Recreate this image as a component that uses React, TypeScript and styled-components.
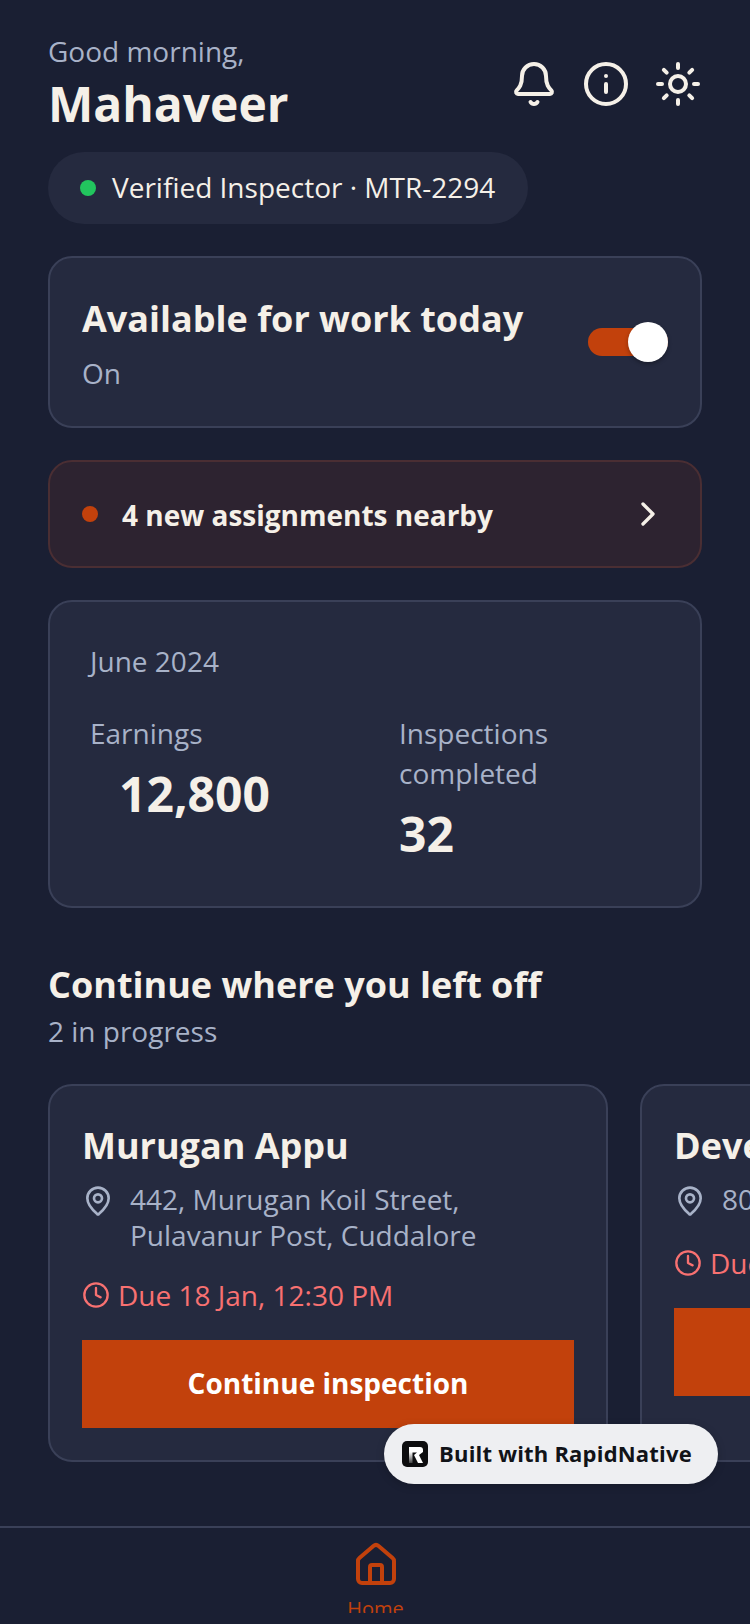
import React from "react";
import styled, { createGlobalStyle } from "styled-components";
import { Bell, ChevronRight, Clock, House, Info, MapPin, Sun } from "lucide-react";

const GlobalStyle = createGlobalStyle`
  html, body {
    margin: 0;
    padding: 0;
    background: #1a1f33;
  }
  * {
    box-sizing: border-box;
  }
`;

const assignments = [
  {
    name: "Murugan Appu",
    address: ["442, Murugan Koil Street,", "Pulavanur Post, Cuddalore"],
    due: "Due 18 Jan, 12:30 PM",
  },
  {
    name: "Devendran Pillai",
    address: ["80, Gandhi Nagar, Panruti"],
    due: "Due 19 Jan, 10:00 AM",
  },
];

const App: React.FC = () => {
  return (
    <Page>
      <GlobalStyle />
      <Content>
        <Header>
          <div>
            <Greeting>Good morning,</Greeting>
            <UserName>Mahaveer</UserName>
          </div>
          <HeaderIcons>
            <Bell size={48} strokeWidth={2} />
            <Info size={48} strokeWidth={2} />
            <Sun size={48} strokeWidth={2} />
          </HeaderIcons>
        </Header>

        <StatusPill>
          <Dot color="#22c55e" />
          <PillText>Verified Inspector · MTR-2294</PillText>
        </StatusPill>

        <AvailabilityCard>
          <div>
            <CardTitle>Available for work today</CardTitle>
            <CardHint>On</CardHint>
          </div>
          <Toggle>
            <ToggleKnob />
          </Toggle>
        </AvailabilityCard>

        <AlertCard>
          <Dot color="#c2410c" />
          <AlertText>4 new assignments nearby</AlertText>
          <ChevronRight size={40} strokeWidth={2} color="#f5f0e8" />
        </AlertCard>

        <StatsCard>
          <Month>June 2024</Month>
          <StatsRow>
            <Stat>
              <StatLabel>Earnings</StatLabel>
              <StatValue indent>12,800</StatValue>
            </Stat>
            <Stat>
              <StatLabel>
                Inspections
                <br />
                completed
              </StatLabel>
              <StatValue>32</StatValue>
            </Stat>
          </StatsRow>
        </StatsCard>

        <SectionTitle>Continue where you left off</SectionTitle>
        <SectionHint>2 in progress</SectionHint>

        <Carousel>
          {assignments.map((item) => (
            <JobCard key={item.name}>
              <JobName>{item.name}</JobName>
              <AddressRow>
                <MapPin size={32} strokeWidth={2} />
                <div>
                  {item.address.map((line) => (
                    <div key={line}>{line}</div>
                  ))}
                </div>
              </AddressRow>
              <DueRow>
                <Clock size={28} strokeWidth={2} />
                <span>{item.due}</span>
              </DueRow>
              <PrimaryButton>Continue inspection</PrimaryButton>
            </JobCard>
          ))}
        </Carousel>
      </Content>

      <TabBar>
        <TabItem>
          <House size={48} strokeWidth={2} />
          <TabLabel>Home</TabLabel>
        </TabItem>
      </TabBar>

      <BuiltBadge>
        <svg width="26" height="26" viewBox="0 0 26 26">
          <defs>
            <linearGradient id="logoStem" x1="0" y1="0" x2="0" y2="1">
              <stop offset="0" stopColor="#fff" />
              <stop offset="1" stopColor="#444" />
            </linearGradient>
          </defs>
          <rect width="26" height="26" rx="5" fill="#0d0d0f" />
          <path d="M7 6h11a3 3 0 0 1 3 3v2l-4 3 4 8h-5l-4-8 3-2.500H7z" fill="#fff" />
          <path d="M7 11h3.500v11H7z" fill="url(#logoStem)" />
        </svg>
        <BadgeText>Built with RapidNative</BadgeText>
      </BuiltBadge>
    </Page>
  );
};

const Page = styled.div`
  position: relative;
  width: 750px;
  height: 1624px;
  display: flex;
  flex-direction: column;
  overflow: hidden;
  background: #1a1f33;
  font-family: "Open Sans", "Liberation Sans", sans-serif;
  color: #f5f0e8;
`;

const Content = styled.main`
  flex: 1;
  min-height: 0;
  overflow: hidden;
  padding: 31px 0 0 48px;
`;

const Header = styled.header`
  display: flex;
  justify-content: space-between;
  align-items: center;
  padding-right: 48px;
`;

const Greeting = styled.div`
  font-size: 28px;
  line-height: 40px;
  color: #a8b2c8;
`;

const UserName = styled.h1`
  margin: 1px 0 0;
  font-size: 48px;
  line-height: 64px;
  font-weight: 700;
`;

const HeaderIcons = styled.div`
  display: flex;
  align-items: center;
  gap: 24px;
`;

const StatusPill = styled.div`
  display: inline-flex;
  align-items: center;
  gap: 16px;
  height: 72px;
  margin-top: 16px;
  padding: 0 33px 0 32px;
  border-radius: 36px;
  background: #252a3f;
  font-size: 28px;
`;

const PillText = styled.span`
  margin-top: -2px;
`;

const Dot = styled.span<{ color: string }>`
  flex: none;
  width: 16px;
  height: 16px;
  border-radius: 50%;
  background: ${(p) => p.color};
`;

const Card = styled.section`
  width: 654px;
  border: 2px solid #3a4058;
  border-radius: 24px;
  background: #252a3f;
`;

const AvailabilityCard = styled(Card)`
  display: flex;
  align-items: center;
  justify-content: space-between;
  height: 172px;
  margin-top: 32px;
  padding: 4px 32px 0;
`;

const CardTitle = styled.div`
  font-size: 36px;
  line-height: 48px;
  font-weight: 700;
`;

const CardHint = styled.div`
  margin-top: 10px;
  font-size: 28px;
  line-height: 40px;
  color: #a8b2c8;
`;

const Toggle = styled.div`
  position: relative;
  width: 80px;
  height: 28px;
  margin-top: -4px;
  border-radius: 14px;
  background: #c2410c;
`;

const ToggleKnob = styled.span`
  position: absolute;
  top: -6px;
  right: 0;
  width: 40px;
  height: 40px;
  border-radius: 50%;
  background: #fff;
  box-shadow: 0 2px 4px rgba(0, 0, 0, 0.3);
`;

const AlertCard = styled(Card)`
  display: flex;
  align-items: center;
  height: 108px;
  margin-top: 32px;
  padding: 0 32px;
  border-color: #4a2e33;
  background: #2d2330;
`;

const AlertText = styled.div`
  flex: 1;
  margin-left: 24px;
  padding-top: 2px;
  font-size: 28px;
  font-weight: 700;
`;

const StatsCard = styled(Card)`
  height: 308px;
  margin-top: 32px;
  padding: 41px 40px 0;
`;

const Month = styled.div`
  font-size: 28px;
  line-height: 36px;
  color: #a8b2c8;
`;

const StatsRow = styled.div`
  display: grid;
  grid-template-columns: 309px 1fr;
  margin-top: 34px;
`;

const Stat = styled.div``;

const StatLabel = styled.div`
  font-size: 28px;
  line-height: 40px;
  color: #a8b2c8;
`;

const StatValue = styled.div<{ indent?: boolean }>`
  margin-top: 9px;
  margin-left: ${(p) => (p.indent ? "29px" : "0")};
  font-size: 48px;
  line-height: 64px;
  font-weight: 700;
`;

const SectionTitle = styled.h2`
  margin: 53px 0 0;
  font-size: 36px;
  line-height: 48px;
  font-weight: 700;
`;

const SectionHint = styled.div`
  margin-top: 2px;
  font-size: 28px;
  line-height: 40px;
  color: #a8b2c8;
`;

const Carousel = styled.div`
  display: flex;
  gap: 32px;
  margin-top: 33px;
`;

const JobCard = styled(Card)`
  flex: none;
  width: 560px;
  height: 378px;
  padding: 32px;
`;

const JobName = styled.div`
  margin-top: 2px;
  font-size: 36px;
  line-height: 52px;
  font-weight: 700;
`;

const AddressRow = styled.div`
  display: flex;
  gap: 16px;
  min-height: 40px;
  margin-top: 9px;
  font-size: 28px;
  line-height: 36px;
  color: #a8b2c8;

  svg {
    flex: none;
    margin-top: 4px;
  }
`;

const DueRow = styled.div`
  display: flex;
  align-items: center;
  gap: 8px;
  margin-top: 22px;
  font-size: 28px;
  line-height: 40px;
  color: #f87171;
`;

const PrimaryButton = styled.button`
  display: block;
  width: 100%;
  height: 88px;
  margin-top: 25px;
  padding: 0 0 2px;
  border: 0;
  background: #c2410c;
  color: #fff;
  font-family: inherit;
  font-size: 28px;
  font-weight: 700;
`;

const TabBar = styled.nav`
  flex: none;
  height: 98px;
  padding-top: 13px;
  border-top: 2px solid #3a4058;
  background: #1a1f33;
`;

const TabItem = styled.div`
  display: flex;
  flex-direction: column;
  align-items: center;
  width: 150px;
  height: 72px;
  margin-left: 301px;
  overflow: hidden;
  color: #c2410c;

  svg {
    flex: none;
  }
`;

const TabLabel = styled.div`
  flex: none;
  margin-top: 6px;
  margin-right: 1px;
  font-size: 20px;
  line-height: 28px;
`;

const BuiltBadge = styled.div`
  position: absolute;
  left: 384px;
  top: 1424px;
  display: flex;
  align-items: center;
  gap: 11px;
  width: 334px;
  height: 60px;
  padding-left: 18px;
  border-radius: 30px;
  background: #eeeff2;
  box-shadow: 0 2px 8px rgba(0, 0, 0, 0.2);
  color: #111318;
  font-size: 22px;
  font-weight: 700;
  letter-spacing: 0.2px;
`;

const BadgeText = styled.span`
  margin-top: -2px;
`;

export default App;
